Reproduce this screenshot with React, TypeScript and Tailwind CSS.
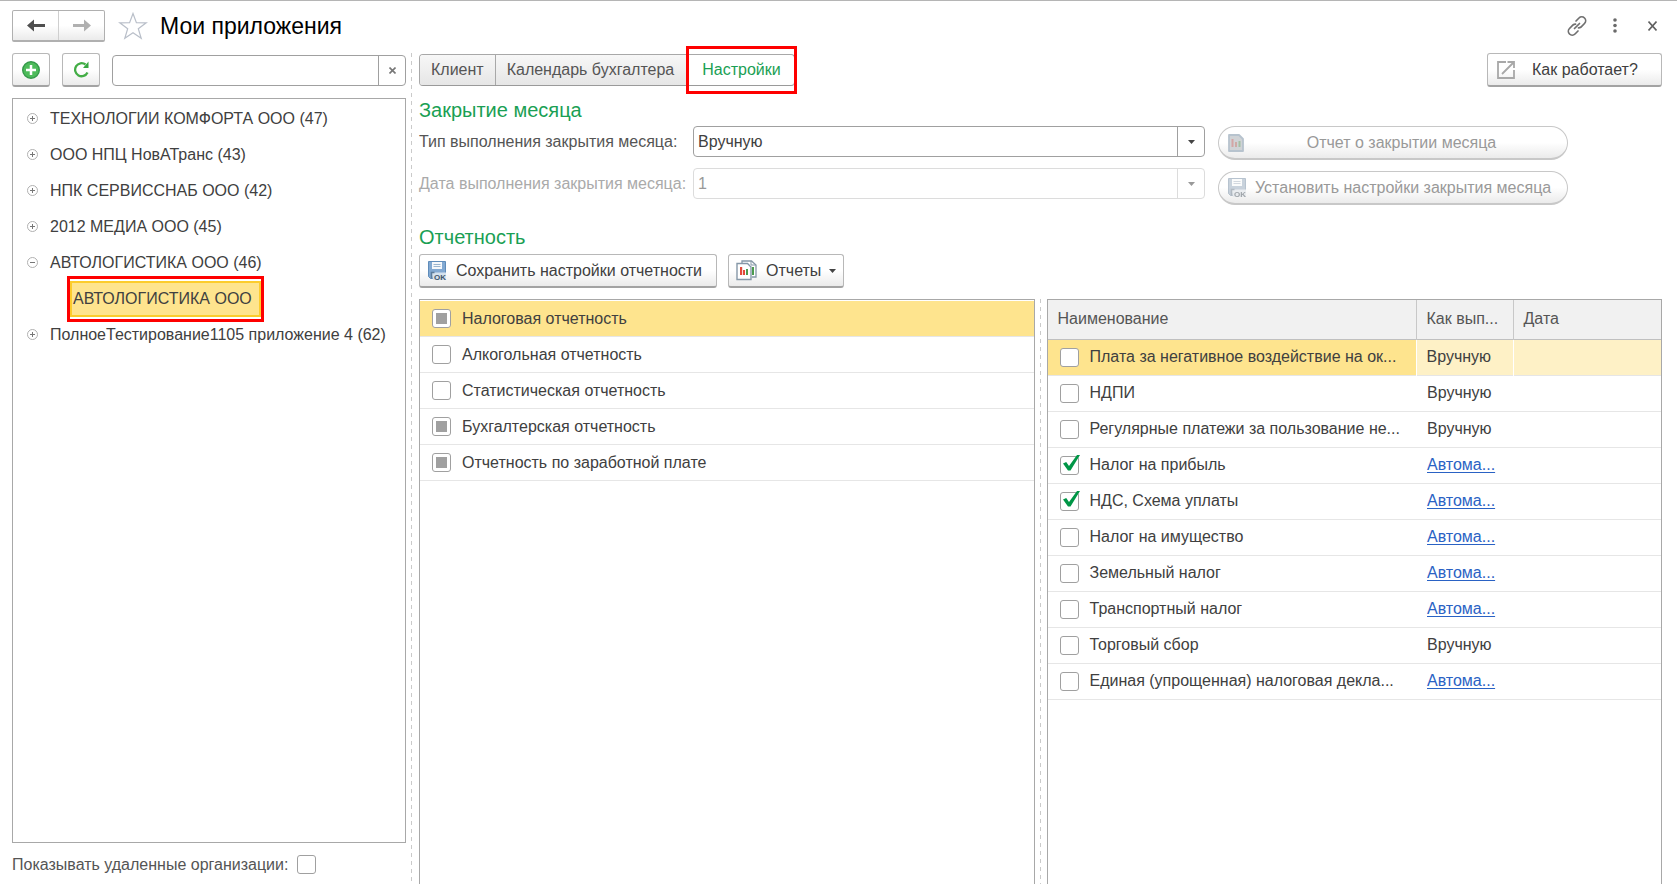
import { useEffect, useRef } from 'react';

type CheckState = 'off' | 'on' | 'mixed';

const organizations = [
  { name: 'ТЕХНОЛОГИИ КОМФОРТА ООО (47)', open: false },
  { name: 'ООО НПЦ НовАТранс (43)', open: false },
  { name: 'НПК СЕРВИССНАБ ООО (42)', open: false },
  { name: '2012 МЕДИА ООО (45)', open: false },
  { name: 'АВТОЛОГИСТИКА ООО (46)', open: true, child: 'АВТОЛОГИСТИКА ООО' },
  { name: 'ПолноеТестирование1105 приложение 4 (62)', open: false },
];

const groups: { name: string; state: CheckState }[] = [
  { name: 'Налоговая отчетность', state: 'mixed' },
  { name: 'Алкогольная отчетность', state: 'off' },
  { name: 'Статистическая отчетность', state: 'off' },
  { name: 'Бухгалтерская отчетность', state: 'mixed' },
  { name: 'Отчетность по заработной плате', state: 'mixed' },
];

const reports: { name: string; state: CheckState; auto: boolean }[] = [
  { name: 'Плата за негативное воздействие на ок...', state: 'off', auto: false },
  { name: 'НДПИ', state: 'off', auto: false },
  { name: 'Регулярные платежи за пользование не...', state: 'off', auto: false },
  { name: 'Налог на прибыль', state: 'on', auto: true },
  { name: 'НДС, Схема уплаты', state: 'on', auto: true },
  { name: 'Налог на имущество', state: 'off', auto: true },
  { name: 'Земельный налог', state: 'off', auto: true },
  { name: 'Транспортный налог', state: 'off', auto: true },
  { name: 'Торговый сбор', state: 'off', auto: false },
  { name: 'Единая (упрощенная) налоговая декла...', state: 'off', auto: true },
];

const button =
  'flex items-center border border-[#b8b8b8] border-b-2 border-b-[#a3a3a3] bg-gradient-to-b from-white from-50% to-[#ebebeb]';

const pill =
  'flex h-[34px] items-center rounded-full border border-b-2 border-[#c8c8c8] bg-gradient-to-b from-white from-50% to-[#ebebeb] pl-[9px] text-[#999]';

function Checkbox({ id, state = 'off' }: { id: string; state?: CheckState }) {
  const ref = useRef<HTMLInputElement>(null);

  useEffect(() => {
    if (ref.current) ref.current.indeterminate = state === 'mixed';
  }, [state]);

  return (
    <span className="relative flex shrink-0">
      <input
        ref={ref}
        id={id}
        type="checkbox"
        defaultChecked={state === 'on'}
        className="grid size-[19px] appearance-none place-content-center rounded-[3px] border border-[#a0a0a0] bg-white before:size-[11px] before:bg-[#a0a0a0] before:opacity-0 indeterminate:before:opacity-100"
      />
      {state === 'on' && (
        <svg className="pointer-events-none absolute -top-px left-[3px]" width="18" height="18" viewBox="0 0 18 18">
          <path d="M0 8.500L3.200 7l2.800 4L14 0h3L7.500 15.500H5z" fill="#009646" />
        </svg>
      )}
    </span>
  );
}

function TreeMark({ open }: { open: boolean }) {
  return (
    <svg width="11" height="12" viewBox="0 0 11 12" fill="none" stroke="#b0b0b0">
      <circle cx="5.5" cy="5.5" r="5" />
      <path d={open ? 'M3 5.5h5' : 'M3 5.5h5M5.5 3v5'} stroke="#777" />
    </svg>
  );
}

function Caret({ color = '#444' }: { color?: string }) {
  return (
    <svg width="7" height="4" viewBox="0 0 7 4">
      <path d="M0 0h7L3.5 4z" fill={color} />
    </svg>
  );
}

function SaveIcon() {
  return (
    <svg width="19" height="19" viewBox="0 0 19 19">
      <path d="M0.5 0.5h17v17h-15l-2-2z" fill="#82a9d2" stroke="#5f8cba" />
      <path d="M4 1h10v7H4z" fill="#f5f8fb" />
      <path d="M5.500 3.500h7M5.500 5.500h7" stroke="#9ab5cf" />
      <path d="M3.500 11.500H18V19H5z" fill="#d5e2ee" />
      <path d="M3.500 17.500v-6h3" fill="none" stroke="#5c7c9c" strokeWidth="1.500" />
      <text x="6" y="18.5" fontSize="8" fontWeight="bold" fontFamily="Liberation Sans, sans-serif" fill="#41566b">
        OK
      </text>
    </svg>
  );
}

function ReportsIcon() {
  return (
    <svg width="21" height="21" viewBox="0 0 21 21">
      <path d="M6 3V1h9.500l4.500 4v12h-4" fill="#fff" stroke="#8698a8" strokeWidth="1.300" />
      <path d="M15 1v4h5" fill="none" stroke="#8698a8" />
      <path d="M17 7v8" stroke="#4b9b4e" strokeWidth="2" />
      <path d="M1 3.500h10.500l3.500 3.500v12.500H1z" fill="#fff" stroke="#8698a8" strokeWidth="1.400" />
      <path d="M4 7h2.200v8H4z" fill="#e34b3b" />
      <path d="M7 10h2v5H7z" fill="#e34b3b" />
      <path d="M10 9h2v6h-2z" fill="#4b9b4e" />
    </svg>
  );
}

function ReportIcon() {
  return (
    <svg width="16" height="18" viewBox="0 0 16 18">
      <path d="M1 1h10l4 4v12H1z" fill="#d0d3d6" stroke="#b7c3ce" strokeWidth="1.800" strokeLinejoin="round" />
      <path d="M3.500 5h2v8h-2z" fill="#d4a5a5" />
      <path d="M7 8h2v5H7z" fill="#cfaaa5" />
      <path d="M10.500 7h2v6h-2z" fill="#a3c0a5" />
    </svg>
  );
}

function Divider() {
  return (
    <div className="ml-[5px] w-px bg-[repeating-linear-gradient(to_bottom,#cacaca_0_4px,transparent_4px_8px)]" />
  );
}

function Header() {
  return (
    <header className="flex h-[50px] items-center border-t border-[#b5b5b5] pr-4 pl-3">
      <div className="flex h-8 w-[93px] rounded-xs border border-b-2 border-[#b0b0b0] bg-gradient-to-b from-white from-50% to-[#ebebeb]">
        <button aria-label="Назад" className="flex flex-1 items-center justify-center border-r border-[#cfcfcf]">
          <svg width="18" height="13" viewBox="0 0 18 13" fill="#4f4f4f">
            <path d="M0 6.500L7 0.500V5H18v3H7v4.500z" />
          </svg>
        </button>
        <button aria-label="Вперед" className="flex flex-1 items-center justify-center">
          <svg width="18" height="13" viewBox="0 0 18 13" fill="#b0b0b0">
            <path d="M18 6.500L11 0.500V5H0v3h11v4.500z" />
          </svg>
        </button>
      </div>
      <button aria-label="В избранное" className="ml-[13px]">
        <svg width="30" height="28" viewBox="0 0 30 28" fill="none" stroke="#b9bfc9" strokeWidth="1.2">
          <path d="M15 1.500l3.400 9.200 9.800.1-7.900 5.900 2.900 9.600L15 20.700l-8.200 5.600 2.900-9.600-7.900-5.900 9.800-.1z" />
        </svg>
      </button>
      <h1 className="ml-3 flex-1 pt-[2px] text-[23px] text-black">Мои приложения</h1>
      <div className="flex items-center text-[#555]">
        <button aria-label="Получить ссылку" className="mr-[26px]">
          <svg width="20" height="20" viewBox="0 0 20 20" fill="none" stroke="#707070" strokeWidth="1.700" strokeLinecap="round">
            <path d="M9 5l3-3a3.800 3.800 0 0 1 5.500 5.500l-3.500 3.500q-1 .8-2.500.8" />
            <path d="M11 15l-3 3a3.800 3.800 0 0 1-5.500-5.500L6 9q1-.8 2.500-.8" />
            <path d="M7.500 12.500l5-5" />
          </svg>
        </button>
        <button aria-label="Еще" className="mr-[31px]">
          <svg width="4" height="15" viewBox="0 0 4 15" fill="#6a6a6a">
            <circle cx="2" cy="2" r="1.800" />
            <circle cx="2" cy="7.500" r="1.800" />
            <circle cx="2" cy="13" r="1.800" />
          </svg>
        </button>
        <button aria-label="Закрыть" className="mr-1">
          <svg width="9" height="10" viewBox="0 0 9 10" stroke="#606060" strokeWidth="1.600">
            <path d="M0.500 0.500l8 9M8.500 0.500l-8 9" />
          </svg>
        </button>
      </div>
    </header>
  );
}

function Sidebar() {
  return (
    <aside className="flex w-[394px] shrink-0 flex-col">
      <div className="flex items-center gap-3 pt-[3px]">
        <button aria-label="Добавить" className={`${button} h-[34px] w-[38px] justify-center rounded-[3px]`}>
          <svg width="18" height="18" viewBox="0 0 18 18">
            <circle cx="9" cy="9" r="8.300" fill="#4dbb5a" stroke="#35994a" strokeWidth="1.400" />
            <path d="M9 4v10M4 9h10" stroke="#fff" strokeWidth="2.500" />
          </svg>
        </button>
        <button aria-label="Обновить" className={`${button} h-[34px] w-[38px] justify-center rounded-[3px]`}>
          <svg width="17" height="17" viewBox="0 0 17 17">
            <path d="M14.500 11.500a6.500 6.500 0 1 1-2-8" fill="none" stroke="#43ad46" strokeWidth="2.300" />
            <path d="M10 7L15.500 7V0.500z" fill="#35a83f" />
          </svg>
        </button>
        <div className="flex h-[31px] flex-1 rounded-[4px] border border-[#a0a0a0]">
          <input type="text" aria-label="Поиск" className="min-w-0 flex-1 px-1 outline-none" />
          <button aria-label="Очистить" className="flex w-[27px] items-center justify-center border-l border-[#a0a0a0]">
            <svg width="7" height="7" viewBox="0 0 7 7" stroke="#777" strokeWidth="1.600">
              <path d="M0.500 0.500l6 6M6.500 0.500l-6 6" />
            </svg>
          </button>
        </div>
      </div>

      <ul className="mt-[11px] flex-1 border border-[#a8a8a8] pt-[2px]">
        {organizations.map((org) => (
          <li key={org.name}>
            <button className="flex h-9 items-center gap-3 pl-[14px]">
              <TreeMark open={org.open} />
              {org.name}
            </button>
            {org.child && (
              <div className="flex h-9 items-center pl-[54px]">
                <button className="-my-1 border-3 border-[#fe0000] py-[2px]">
                  <span className="block border-2 border-[#fccc2c] bg-[#fee48e] py-1 pr-[7px] pl-px">{org.child}</span>
                </button>
              </div>
            )}
          </li>
        ))}
      </ul>

      <div className="flex h-[41px] items-center gap-[9px] pt-[2px] text-[#555]">
        <label htmlFor="show-deleted">Показывать удаленные организации:</label>
        <Checkbox id="show-deleted" />
      </div>
    </aside>
  );
}

function Tabs() {
  return (
    <div className="flex items-center justify-between pt-[3px]">
      <nav className="flex h-8 rounded-[4px] border border-[#a8a8a8] border-b-[#9a9a9a] text-[#555]">
        <button className="rounded-l-[3px] bg-gradient-to-b from-[#f7f7f7] to-[#e6e6e6] px-[11px]">Клиент</button>
        <button className="border-l border-[#a8a8a8] bg-gradient-to-b from-[#f7f7f7] to-[#e6e6e6] pr-3 pl-[11px]">
          Календарь бухгалтера
        </button>
        <button className="-my-[9px] -mr-[3px] border-3 border-[#fe0000] px-[13px] text-[#1a9f54]">Настройки</button>
      </nav>
      <button className={`${button} h-[34px] w-[175px] rounded-[3px] pl-[9px]`}>
        <svg width="18" height="18" viewBox="0 0 18 18" fill="none" stroke="#a8a8a8" strokeWidth="1.800">
          <path d="M9 1H1v16h16V9" />
          <path d="M5 13L16 2M10.500 1H17v6" />
        </svg>
        <span className="ml-[17px]">Как работает?</span>
      </button>
    </div>
  );
}

function MonthClosing() {
  return (
    <section>
      <h2 className="mt-[9px] text-xl text-[#1a9f54]">Закрытие месяца</h2>
      <div className="mt-[2px] flex gap-[13px] pr-[94px]">
        <div className="grid flex-1 grid-cols-[274px_1fr] content-start gap-y-[11px]">
          <label htmlFor="closing-type" className="leading-[31px] text-[#555]">
            Тип выполнения закрытия месяца:
          </label>
          <div className="flex h-[31px] rounded-[4px] border border-[#a0a0a0]">
            <select id="closing-type" className="min-w-0 flex-1 appearance-none px-1 outline-none">
              <option>Вручную</option>
            </select>
            <span className="pointer-events-none flex w-[27px] items-center justify-center border-l border-[#a0a0a0]">
              <Caret />
            </span>
          </div>
          <label htmlFor="closing-date" className="leading-[31px] text-[#aaa]">
            Дата выполнения закрытия месяца:
          </label>
          <div className="flex h-[31px] rounded-[4px] border border-[#dcdcdc]">
            <select
              id="closing-date"
              disabled
              className="min-w-0 flex-1 appearance-none px-1 text-[#999] opacity-100 outline-none"
            >
              <option>1</option>
            </select>
            <span className="pointer-events-none flex w-[27px] items-center justify-center border-l border-[#dcdcdc]">
              <Caret color="#999" />
            </span>
          </div>
        </div>
        <div className="flex w-[350px] flex-col gap-[11px]">
          <button disabled className={pill}>
            <ReportIcon />
            <span className="flex-1 pr-2">Отчет о закрытии месяца</span>
          </button>
          <button disabled className={pill}>
            <span className="opacity-50 grayscale-50">
              <SaveIcon />
            </span>
            <span className="ml-2">Установить настройки закрытия месяца</span>
          </button>
        </div>
      </div>
    </section>
  );
}

function ReportGroups() {
  return (
    <ul className="border border-b-0 border-[#a8a8a8] pt-px">
      {groups.map((group, index) => (
        <li key={group.name} className={index === 0 ? 'border-b border-[#e6e6e6] bg-[#fee48e]' : 'border-b border-[#e6e6e6]'}>
          <label className="flex h-[35px] items-center gap-[11px] pl-3">
            <Checkbox id={`group-${index}`} state={group.state} />
            {group.name}
          </label>
        </li>
      ))}
    </ul>
  );
}

function ReportTable() {
  return (
    <div className="border border-b-0 border-[#a8a8a8]">
      <table className="w-full table-fixed text-left">
        <thead>
          <tr className="h-[39px] border-b border-[#c0c0c0] bg-[#f1f1f1] text-[#555]">
            <th className="pl-[10px] font-normal">Наименование</th>
            <th className="w-[97px] border-l border-[#c8c8c8] pl-[10px] font-normal whitespace-nowrap">Как вып...</th>
            <th className="w-[148px] border-l border-[#c8c8c8] pl-[10px] font-normal">Дата</th>
          </tr>
        </thead>
        <tbody>
          {reports.map((report, index) => (
            <tr key={report.name} className="h-9 border-b border-[#e6e6e6]">
              <td className={index === 0 ? 'bg-[#fee48e] pl-3' : 'pl-3'}>
                <label className="flex items-center gap-[11px] whitespace-nowrap">
                  <Checkbox id={`report-${index}`} state={report.state} />
                  {report.name}
                </label>
              </td>
              <td className={index === 0 ? 'border-l border-white bg-[#fef1c6] pl-[10px]' : 'pl-[11px]'}>
                {report.auto ? (
                  <a href="#" className="text-[#2a62c4] underline underline-offset-2">
                    Автома...
                  </a>
                ) : (
                  'Вручную'
                )}
              </td>
              <td className={index === 0 ? 'border-l border-white bg-[#fef1c6]' : ''}></td>
            </tr>
          ))}
        </tbody>
      </table>
    </div>
  );
}

export default function App() {
  return (
    <div className="flex min-h-screen flex-col bg-white font-['Liberation_Sans',Arial,sans-serif] text-base text-[#404040]">
      <Header />
      <div className="flex flex-1 pr-[15px] pl-3">
        <Sidebar />
        <div className="flex pt-[3px]">
          <Divider />
        </div>
        <main className="ml-[7px] flex min-w-0 flex-1 flex-col">
          <Tabs />
          <MonthClosing />
          <h2 className="mt-[18px] text-xl text-[#1a9f54]">Отчетность</h2>
          <div className="mt-[3px] flex gap-[11px]">
            <button className={`${button} h-[34px] rounded-[3px] pr-[14px] pl-2`}>
              <SaveIcon />
              <span className="ml-[9px]">Сохранить настройки отчетности</span>
            </button>
            <button className={`${button} h-[34px] rounded-[3px] px-[7px]`}>
              <ReportsIcon />
              <span className="mr-2 ml-[9px]">Отчеты</span>
              <Caret />
            </button>
          </div>
          <div className="mt-[11px] grid flex-1 grid-cols-[1fr_12px_1fr]">
            <ReportGroups />
            <Divider />
            <ReportTable />
          </div>
        </main>
      </div>
    </div>
  );
}
